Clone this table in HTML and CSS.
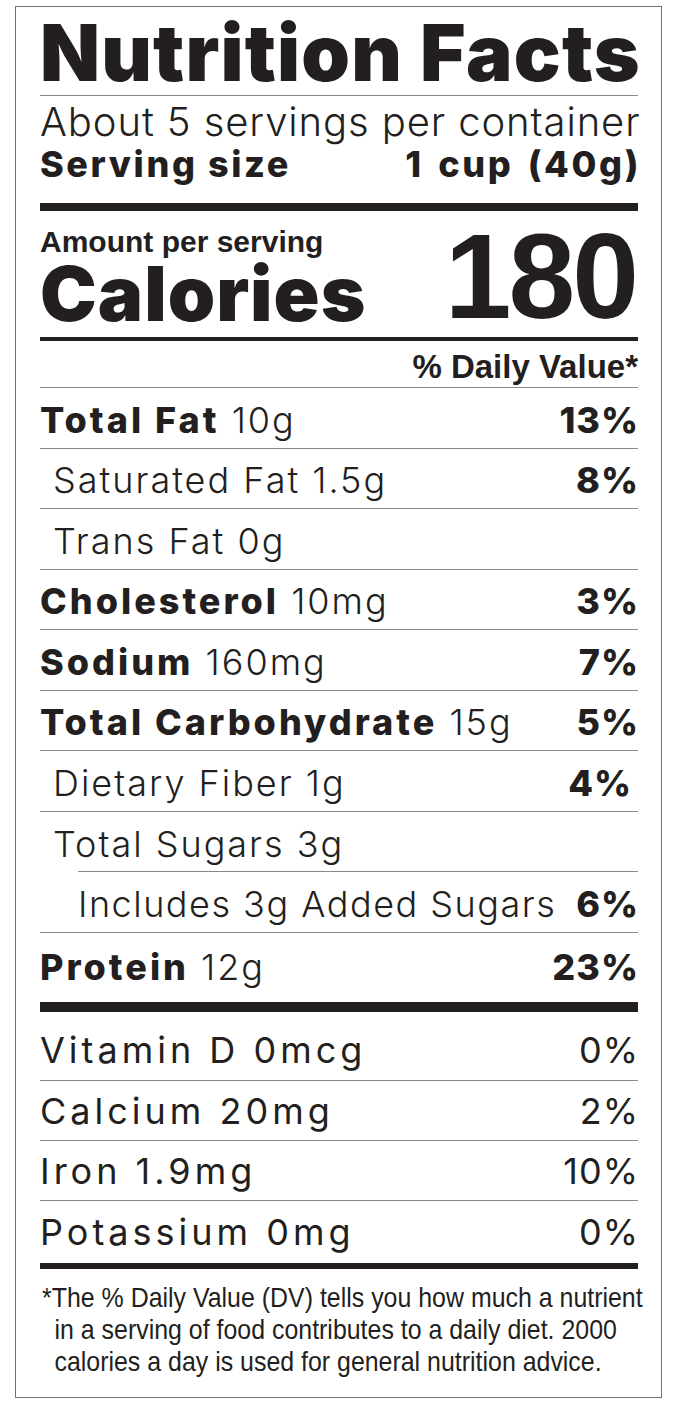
FILE: index.html
```html
<!DOCTYPE html>
<html lang="en">
<head>
<meta charset="utf-8">
<title>Nutrition Facts</title>
<link rel="stylesheet" href="styles.css">
</head>
<body>
<div class="label">
  <h1 class="title">Nutrition Facts</h1>
  <div class="servings">
    <div class="per-container">About 5 servings per container</div>
    <div class="serving-size"><span>Serving size</span><span>1 cup (40g)</span></div>
  </div>
  <div class="calories">
    <div class="cal-left">
      <div class="amount">Amount per serving</div>
      <div class="cal-word">Calories</div>
    </div>
    <div class="cal-num">180</div>
  </div>
  <div class="dv-head">% Daily Value*</div>
  <div class="row"><span class="name"><b>Total Fat</b> 10g</span><b class="pct">13%</b></div>
  <div class="row ind1"><span class="name">Saturated Fat 1.5g</span><b class="pct">8%</b></div>
  <div class="row ind1"><span class="name">Trans Fat 0g</span></div>
  <div class="row"><span class="name"><b>Cholesterol</b> 10mg</span><b class="pct">3%</b></div>
  <div class="row"><span class="name"><b>Sodium</b> 160mg</span><b class="pct">7%</b></div>
  <div class="row"><span class="name"><b>Total Carbohydrate</b> 15g</span><b class="pct">5%</b></div>
  <div class="row ind1"><span class="name">Dietary Fiber 1g</span><b class="pct pct-in">4%</b></div>
  <div class="row ind1 line-ind"><span class="name">Total Sugars 3g</span></div>
  <div class="row ind2 added"><span class="name">Includes 3g Added Sugars</span><b class="pct">6%</b></div>
  <div class="row protein"><span class="name"><b>Protein</b> 12g</span><b class="pct">23%</b></div>
  <div class="vitamins">
    <div class="vrow first"><span>Vitamin D 0mcg</span><span class="vpct">0%</span></div>
    <div class="vrow"><span>Calcium 20mg</span><span class="vpct">2%</span></div>
    <div class="vrow"><span>Iron 1.9mg</span><span class="vpct">10%</span></div>
    <div class="vrow last"><span>Potassium 0mg</span><span class="vpct">0%</span></div>
  </div>
  <div class="foot-wrap">
    <p class="foot">*The % Daily Value (DV) tells you how much a nutrient<br><span class="foot-ind">in a serving of food contributes to a daily diet. 2000<br>calories a day is used for general nutrition advice.</span></p>
  </div>
</div>
</body>
</html>
```

FILE: styles.css
```css
* { box-sizing: border-box; }
html, body { margin: 0; padding: 0; background: #fff; }
body { color: #231f20; font-family: "Inter", "Liberation Sans", sans-serif; }

.label {
  width: 647px;
  height: 1392px;
  margin: 6px 0 0 15px;
  border: 1px solid #6f6f6f;
  padding: 0 23px 0 24px;
}

.title {
  margin: 0;
  height: 89px;
  font-weight: 900;
  font-size: 78px;
  line-height: 92px;
  letter-spacing: 1.2px;
  white-space: nowrap;
  border-bottom: 1px solid #8a8a8a;
}

.servings {
  height: 115px;
  border-bottom: 8px solid #231f20;
  padding-top: 6px;
}
.per-container {
  font-weight: 300;
  font-size: 40px;
  line-height: 40px;
  letter-spacing: 0.9px;
  white-space: nowrap;
}
.serving-size {
  display: flex;
  justify-content: space-between;
  margin-top: 2px;
  font-weight: 800;
  font-size: 36px;
  line-height: 40px;
  letter-spacing: 2.6px;
  white-space: nowrap;
}
.serving-size span:last-child { margin-right: -3px; word-spacing: 4px; }

.calories {
  display: flex;
  justify-content: space-between;
  align-items: flex-end;
  height: 130px;
  border-bottom: 4px solid #231f20;
  padding-bottom: 8px;
}
.amount {
  font-family: "Liberation Sans", sans-serif;
  font-weight: 700;
  font-size: 30px;
  line-height: 30px;
  white-space: nowrap;
}
.cal-word {
  font-weight: 900;
  font-size: 76px;
  line-height: 72px;
  letter-spacing: 1px;
}
.cal-num {
  font-family: "Liberation Sans", sans-serif;
  font-weight: 700;
  font-size: 120px;
  line-height: 105px;
  letter-spacing: -3px;
  margin-right: 2px;
}

.dv-head {
  height: 47px;
  padding-top: 2px;
  border-bottom: 1px solid #8a8a8a;
  text-align: right;
  font-family: "Liberation Sans", sans-serif;
  font-weight: 700;
  font-size: 33px;
  line-height: 48px;
  white-space: nowrap;
}

.row {
  display: flex;
  justify-content: space-between;
  align-items: center;
  height: 60.5px;
  padding-top: 4px;
  border-bottom: 1px solid #8a8a8a;
  font-size: 36px;
  font-weight: 300;
  letter-spacing: 2px;
  white-space: nowrap;
}
.row b { font-weight: 800; letter-spacing: 3px; }
.row .pct { letter-spacing: 1px; margin-right: -1px; }
.row.ind1 { padding-left: 13px; }
.row.ind2 { padding-left: 38px; }
.row.added { letter-spacing: 1.5px; }
.row.line-ind {
  border-bottom: none;
  background: linear-gradient(#8a8a8a, #8a8a8a) no-repeat right bottom / 560px 1px;
}
.row .pct-in { margin-right: 6px; }
.row.protein {
  height: 79px;
  padding-top: 0;
  border-bottom: 10px solid #231f20;
}

.vrow {
  display: flex;
  justify-content: space-between;
  align-items: center;
  height: 60px;
  padding-top: 2px;
  border-bottom: 1px solid #8a8a8a;
  font-size: 36px;
  font-weight: 400;
  letter-spacing: 4px;
  white-space: nowrap;
}
.vpct { letter-spacing: 1px; margin-right: -1px; }
.vrow.first { height: 69px; padding-top: 8px; }
.vrow.last { height: 68px; padding-top: 0; border-bottom: 6px solid #231f20; }

.foot-wrap { padding-top: 13px; }
.foot {
  margin: 0 0 0 2px;
  font-family: "Liberation Sans", sans-serif;
  font-size: 28px;
  line-height: 32px;
  white-space: nowrap;
  transform: scaleX(0.89);
  transform-origin: left top;
}
.foot-ind { display: inline-block; padding-left: 14px; }
```
